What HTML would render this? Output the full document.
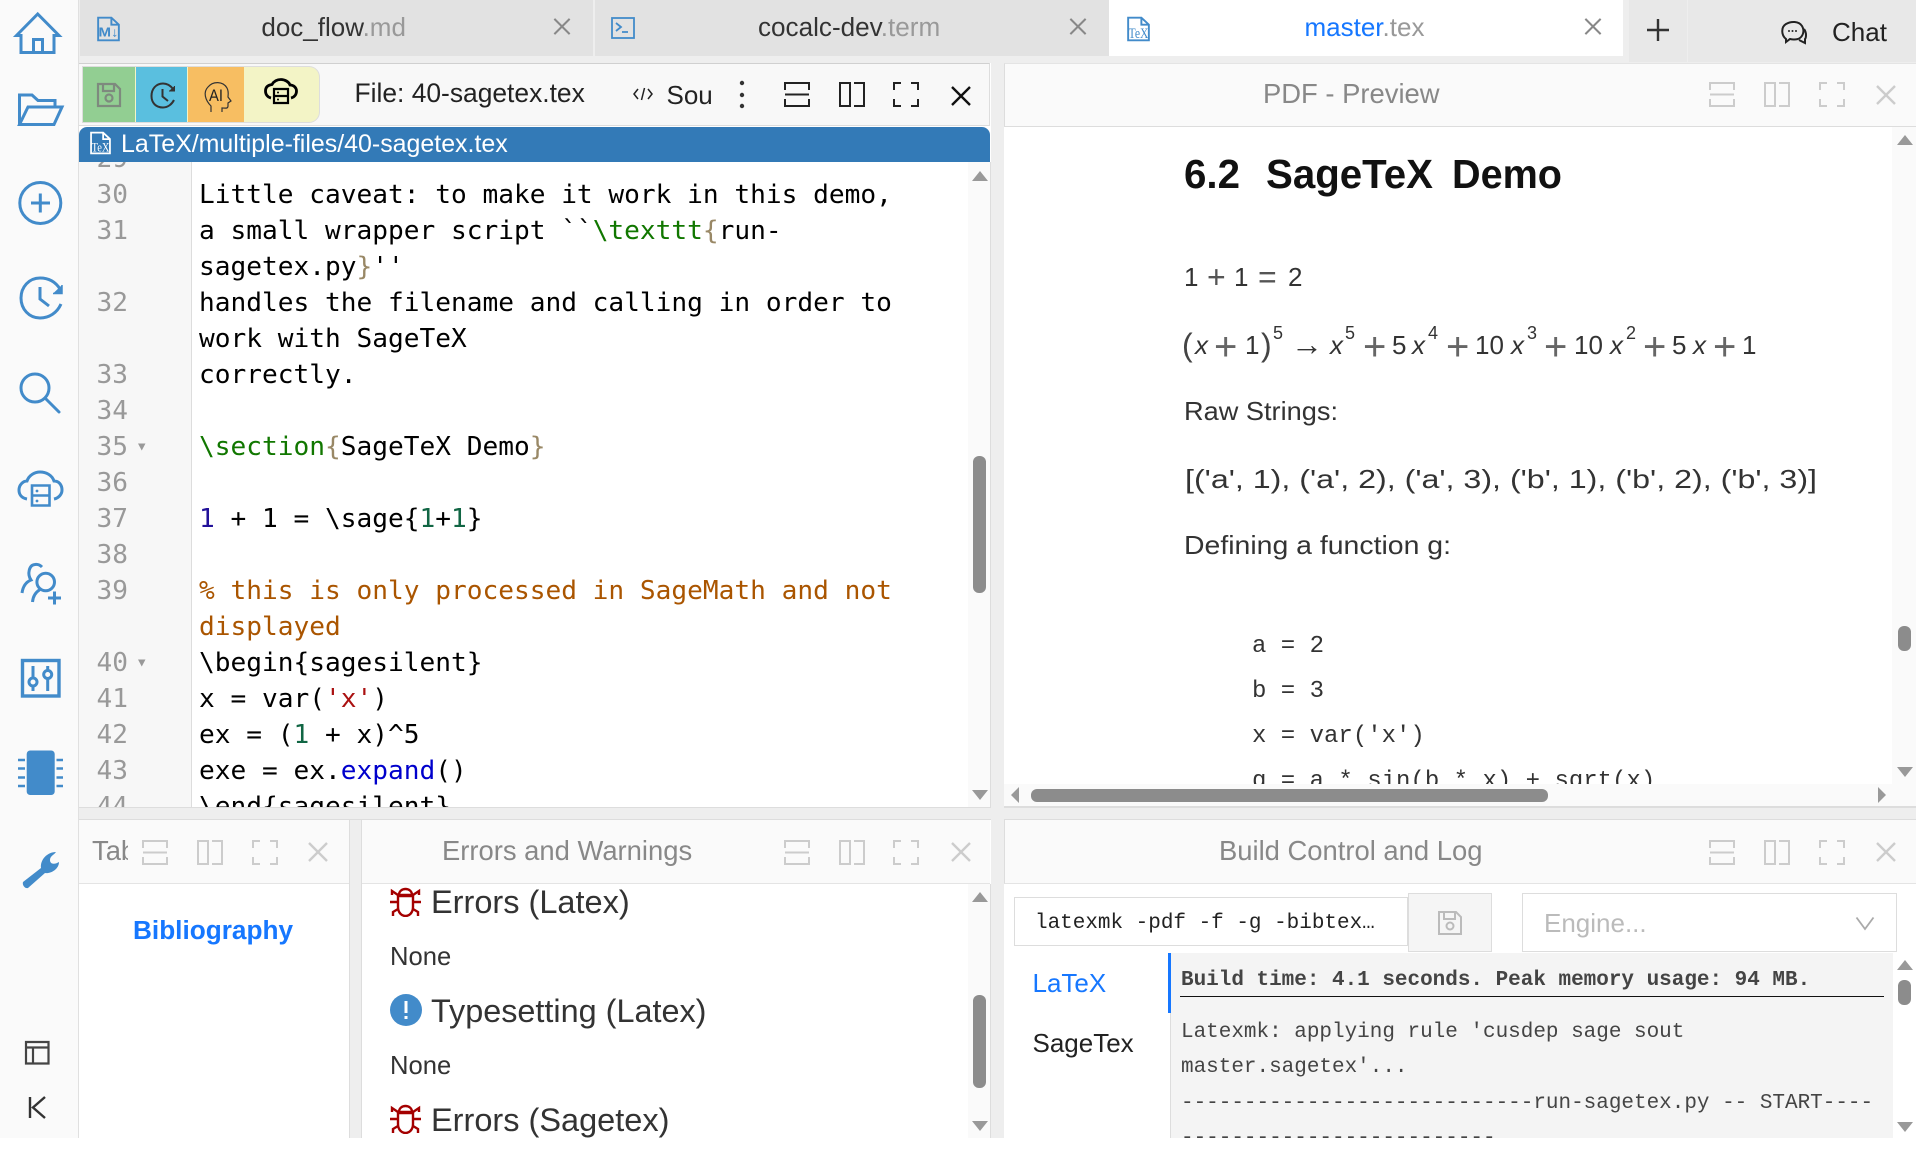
<!DOCTYPE html>
<html><head><meta charset="utf-8"><title>CoCalc</title>
<style>
html,body{margin:0;padding:0;background:#fff}
body{position:relative;width:1916px;height:1138px;overflow:hidden;font-family:"Liberation Sans",sans-serif;color:#333}
.a{position:absolute}
.t{position:absolute;white-space:nowrap;line-height:36px;font-size:26px}
.tt{font-size:27.4px;color:#888}
.g{color:#999}
svg{position:absolute;overflow:visible}
.code{position:absolute;left:79px;top:162px;width:889px;height:645px;overflow:hidden;background:#fff}
.code div{position:absolute;white-space:pre;font-family:"DejaVu Sans Mono",monospace;font-size:26.17px;line-height:36px;color:#000;margin-top:1.6px}
.code .gut{position:absolute;left:0;top:0;width:112px;height:645px;background:#f7f7f7;border-right:1px solid #ddd;margin:0}
.code .n{color:#999;left:17.5px}
.code .l{left:120px}
.kw{color:#117700}.br{color:#998866}.at{color:#221199}.cm{color:#aa5500}.st{color:#aa1111}.nu{color:#116644}.va{color:#0000cc}
.mono{font-family:"Liberation Mono",monospace;font-size:20.98px}
</style></head>
<body>
<svg width="0" height="0" style="position:absolute">
<defs>
<symbol id="sh" viewBox="0 0 26 25"><path d="M1 8V1H25V8M1 12.5H25M1 17V24H25V17" fill="none" stroke="currentColor" stroke-width="2"/></symbol>
<symbol id="sv" viewBox="0 0 26 25"><path d="M11 1H1V24H11ZM15 1H25V24H15" fill="none" stroke="currentColor" stroke-width="2"/></symbol>
<symbol id="fs" viewBox="0 0 26 25"><path d="M8 1H1V8M18 1H25V8M1 17V24H8M25 17V24H18" fill="none" stroke="currentColor" stroke-width="2"/></symbol>
<symbol id="xx" viewBox="0 0 20 20"><path d="M1 1L19 19M19 1L1 19" fill="none" stroke="currentColor" stroke-width="2.4"/></symbol>
<symbol id="bug" viewBox="0 0 31 31"><g fill="none" stroke="#a40000" stroke-width="2.4"><path d="M9 9C9 1 22 1 22 9Z"/><path d="M8 10H23V21C23 27 19 30 15.5 30C12 30 8 27 8 21Z"/><path d="M0 16H8M23 16H31M8 9L2 5V9M23 9L29 5V9M8 23L3 26V30M23 23L28 26V30"/></g></symbol>
<symbol id="fl" viewBox="0 0 24 26"><path d="M1.2 1.2H15L22.8 8.5V24.8H1.2ZM15 1.2V8.5H22.8" fill="none" stroke="currentColor" stroke-width="2"/></symbol>
</defs>
</svg>

<!-- left sidebar -->
<div class="a" style="left:0;top:0;width:78px;height:1138px;background:#fafafa;border-right:1px solid #e0e0e0"></div>
<svg style="left:0;top:0" width="79" height="1138" fill="none" stroke="#428bca" stroke-width="3">
<path d="M21 35.5H16.5L37.7 14L59 35.5H54V52.5H21ZM33.5 52.5V39.5H42.5V52.5"/>
<path d="M19.5 124V95H32L38 100.5H55V107M19.5 124.5L28 107H62L54 124.5Z"/>
<circle cx="40.3" cy="203" r="20.5"/><path d="M31 203H50M40.3 193.5V212.5"/>
<path d="M60 289C55 281 48 278 40 278C29 278 21 287 21 298C21 309 29 318 40 318C49 318 57 313 61 304"/>
<path d="M62 285V293.5H53" fill="#428bca" stroke-width="1.5"/>
<path d="M40 287V299L49 306"/>
<circle cx="35" cy="388" r="14"/><path d="M45 398L59 412" stroke-linecap="round"/>
<path d="M27 499C21 498 19 494 19 490C19 485 23 481 27 481C29 475 35 472 40 472C46 472 52 475 54 481C59 481 62 485 62 490C62 494 59 498 54 499"/>
<path d="M32 485.500H49.500V505.500H32ZM32 495.500H49.500" stroke-width="2.6"/>
<circle cx="37" cy="491" r="1.400" fill="#428bca" stroke="none"/><circle cx="37" cy="501" r="1.400" fill="#428bca" stroke="none"/>
<circle cx="45.700" cy="582" r="8.800"/>
<path d="M32.500 602C33 596 36 592 40 589.500M22 593C23 586 26 582 31 580C27 574 29 565 35 564.500C38 564 40 565 42 567"/>
<path d="M48 598H61M54.500 591.500V604.500"/>
<rect x="22.500" y="660.500" width="36.500" height="35.500" stroke-width="3.400"/>
<path d="M33 666V677M33 687V691M47.700 666V670M47.700 679V691"/>
<circle cx="33" cy="682" r="4"/><circle cx="47.700" cy="674.500" r="4"/>
<path d="M23 882L41 868C40 860 47 852 56 852C54 855 50 856 50 860C50 864 54 865 59 862C59 869 51 874 45 873L28 888C25 889 22 885 23 882Z" fill="#428bca" stroke="none"/>
<rect x="26.700" y="750.500" width="28" height="44.500" rx="3.500" fill="#428bca" stroke="none"/>
<path d="M18 760H25M18 768.500H25M18 777.500H25M18 786H25M56.500 760H63M56.500 768.500H63M56.500 777.500H63M56.500 786H63" stroke-width="2.600"/>
<g stroke="#444" stroke-width="2.200"><path d="M26 1042H48.500V1063.500H26ZM26 1047.500H48.500M33 1047.500V1063.500"/></g>
<g stroke="#333" stroke-width="2.400"><path d="M30 1097V1118M45 1097L33 1107.500L45 1118"/></g>
</svg>

<!-- tabs -->
<div class="a" style="left:79px;top:0;width:1837px;height:63px;background:#eee"></div>
<div class="a" style="left:80px;top:0;width:513px;height:56px;background:#e2e2e2"></div>
<div class="a" style="left:595px;top:0;width:513.500px;height:56px;background:#e2e2e2"></div>
<div class="a" style="left:1109px;top:0;width:514px;height:56px;background:#fff"></div>
<div class="a" style="left:1629px;top:0;width:58px;height:62px;background:#e8e8e8"></div>
<div class="a" style="left:1688px;top:0;width:228px;height:62px;background:#e8e8e8"></div>
<svg style="left:97px;top:15.500px;color:#428bca" width="23" height="26"><use href="#fl" width="23" height="26"/><text x="1.500" y="20.500" font-family="Liberation Sans" font-weight="bold" font-size="13" fill="#428bca" textLength="20" lengthAdjust="spacingAndGlyphs">M↓</text></svg>
<div class="t" style="left:261.400px;top:9px;color:#333;font-size:26px">doc_flow<span class="g">.md</span></div>
<svg style="left:553px;top:18px;color:#888" width="18" height="17"><use href="#xx" width="18" height="17"/></svg>
<svg style="left:611px;top:17px" width="24" height="22" fill="none" stroke="#428bca" stroke-width="1.800"><rect x="1" y="1" width="22" height="20"/><path d="M5 6L10 10L5 14M11 15H17"/></svg>
<div class="t" style="left:758px;top:9px;color:#333;font-size:26.100px">cocalc-dev<span class="g">.term</span></div>
<svg style="left:1069px;top:18px;color:#888" width="18" height="17"><use href="#xx" width="18" height="17"/></svg>
<svg style="left:1127px;top:15.500px;color:#428bca" width="23" height="26"><use href="#fl" width="23" height="26"/><text x="1.500" y="22" font-family="Liberation Serif" font-size="15" fill="#428bca" textLength="20" lengthAdjust="spacingAndGlyphs">TeX</text></svg>
<div class="t" style="left:1304.500px;top:9px;color:#1677ff">master<span class="g">.tex</span></div>
<svg style="left:1584px;top:18px;color:#888" width="18" height="17"><use href="#xx" width="18" height="17"/></svg>
<svg style="left:1647px;top:19px" width="22" height="22" stroke="#333" stroke-width="2.400"><path d="M0 11H22M11 0V22"/></svg>
<svg style="left:1781px;top:21px" width="26" height="23" fill="none" stroke="#222" stroke-width="2"><path d="M5 18C0 14 0 6 5 3C10 0 18 0 21 5C24 10 22 16 17 18C13 19 9 18 9 18L5 21Z"/><path d="M23 8C26 12 25 17 24 18V22L18 19"/><g fill="#222" stroke="none"><circle cx="8" cy="10" r="1"/><circle cx="11.500" cy="10" r="1"/><circle cx="15" cy="10" r="1"/></g></svg>
<div class="t" style="left:1832px;top:14px;color:#222">Chat</div>

<!-- editor frame -->
<div class="a" style="left:79px;top:63px;width:911px;height:63px;background:#f8f8f8;border-top:1px solid #d0d0d0;border-bottom:1px solid #ddd;box-sizing:border-box;border-right:1px solid #ddd"></div>
<div class="a" style="left:83px;top:67px;width:236px;height:55px;border-radius:0 10px 10px 0;overflow:hidden;background:#f3f4c6;box-shadow:0 0 0 1px #ddd">
<div class="a" style="left:0;top:0;width:52px;height:55px;background:#92ce92"></div>
<div class="a" style="left:53px;top:0;width:51px;height:55px;background:#5abfdf"></div>
<div class="a" style="left:105px;top:0;width:56px;height:55px;background:#f7be62"></div>
</div>
<svg style="left:97px;top:83px" width="24" height="24" fill="none" stroke="#7e8a7e" stroke-width="2.200"><path d="M1 1H18L23 6V23H1ZM6 1V8H17V1"/><circle cx="12" cy="15" r="3.500"/></svg>
<svg style="left:150px;top:82px" width="26" height="27" fill="none" stroke="#333" stroke-width="2"><path d="M23 7C20 3 17 1.500 13 1.500C6 1.500 1.500 7 1.500 14C1.500 21 6 25.500 13 25.500C18 25.500 22 22 24 18"/><path d="M24.500 4V9H19" fill="#333" stroke-width="1"/><path d="M12.500 7V14.500L18 19"/></svg>
<svg style="left:204px;top:82px" width="28" height="31" fill="none" stroke="#333" stroke-width="1.200"><path d="M7 30V24C1 18 -1 10 4 5C9 -1 19 -1 23 6C25 10 24 13 24 15L27 19L24 21V24C24 27 21 26 18 26V30"/><text x="5" y="19" font-family="Liberation Sans" font-size="17" fill="#222" stroke="none" textLength="14" lengthAdjust="spacingAndGlyphs">AI</text></svg>
<svg style="left:264px;top:78px" width="34" height="26" fill="none" stroke="#000" stroke-width="2.800"><path d="M7 20C3 19 1.500 16 1.500 13C1.500 9 4 7 8 6.500C10 3 13 1.500 17 1.500C21 1.500 25 4 26 7C30 7 32.500 10 32.500 13C32.500 16 31 19 27 20"/><path d="M10 11H24V25H10ZM10 18H24" stroke-width="2.200"/><circle cx="14" cy="14.500" r="1" fill="#000" stroke="none"/><circle cx="14" cy="21.500" r="1" fill="#000" stroke="none"/></svg>
<div class="t" style="left:354.500px;top:75px;font-size:26.400px;color:#222">File: 40-sagetex.tex</div>
<svg style="left:633px;top:87px" width="20" height="14" fill="none" stroke="#222" stroke-width="1.500"><path d="M5 2L1 7L5 12M15 2L19 7L15 12M11.500 1L8.500 13"/></svg>
<div class="t" style="left:666.500px;top:77px;color:#222">Sou</div>
<svg style="left:738px;top:80px" width="8" height="30" fill="#333"><circle cx="4" cy="3" r="2.200"/><circle cx="4" cy="15" r="2.200"/><circle cx="4" cy="26" r="2.200"/></svg>
<svg style="left:784px;top:82px;color:#222" width="26" height="25"><use href="#sh" width="26" height="25"/></svg>
<svg style="left:839px;top:82px;color:#222" width="26" height="25"><use href="#sv" width="26" height="25"/></svg>
<svg style="left:893px;top:82px;color:#222" width="26" height="25"><use href="#fs" width="26" height="25"/></svg>
<svg style="left:951px;top:86px;color:#111" width="20" height="20"><use href="#xx" width="20" height="20"/></svg>

<!-- path bar -->
<div class="a" style="left:79px;top:127px;width:911px;height:35px;background:#337ab7;border-radius:8px 8px 0 0"></div>
<svg style="left:90px;top:130px;color:#fff" width="21" height="26"><use href="#fl" width="21" height="26"/><text x="1.500" y="21.500" font-family="Liberation Serif" font-size="13" fill="#fff" textLength="18" lengthAdjust="spacingAndGlyphs">TeX</text></svg>
<div class="t" style="left:121px;top:126px;color:#fff;font-size:24.950px">LaTeX/multiple-files/40-sagetex.tex</div>

<!-- code editor -->
<div class="code">
<div class="gut"></div>
<div class="n" style="top:-23px">29</div>
<div class="n" style="top:13px">30</div><div class="l" style="top:13px">Little caveat: to make it work in this demo,</div>
<div class="n" style="top:49px">31</div><div class="l" style="top:49px">a small wrapper script ``<span class="kw">\texttt</span><span class="br">{</span>run-</div>
<div class="l" style="top:85px">sagetex.py<span class="br">}</span>''</div>
<div class="n" style="top:121px">32</div><div class="l" style="top:121px">handles the filename and calling in order to</div>
<div class="l" style="top:157px">work with SageTeX</div>
<div class="n" style="top:193px">33</div><div class="l" style="top:193px">correctly.</div>
<div class="n" style="top:229px">34</div>
<div class="n" style="top:265px">35</div><div class="l" style="top:265px"><span class="kw">\section</span><span class="br">{</span>SageTeX Demo<span class="br">}</span></div>
<div class="n" style="top:301px">36</div>
<div class="n" style="top:337px">37</div><div class="l" style="top:337px"><span class="at">1</span> + 1 = \sage{<span class="nu">1</span>+<span class="nu">1</span>}</div>
<div class="n" style="top:373px">38</div>
<div class="n" style="top:409px">39</div><div class="l cm" style="top:409px;color:#aa5500">% this is only processed in SageMath and not</div>
<div class="l" style="top:445px;color:#aa5500">displayed</div>
<div class="n" style="top:481px">40</div><div class="l" style="top:481px">\begin{sagesilent}</div>
<div class="n" style="top:517px">41</div><div class="l" style="top:517px">x = var(<span class="st">'x'</span>)</div>
<div class="n" style="top:553px">42</div><div class="l" style="top:553px">ex = (<span class="nu">1</span> + x)^5</div>
<div class="n" style="top:589px">43</div><div class="l" style="top:589px">exe = ex.<span class="va">expand</span>()</div>
<div class="n" style="top:625px">44</div><div class="l" style="top:625px">\end{sagesilent}</div>
</div>
<svg style="left:137px;top:0" width="10" height="800" fill="#999"><path d="M1 443.500H8.500L4.750 450.500ZM1 659.500H8.500L4.750 666.500Z"/></svg>
<!-- editor scrollbar -->
<div class="a" style="left:968px;top:162px;width:22px;height:645px;background:#fafafa;border-right:1px solid #ddd"></div>
<svg style="left:972px;top:168px" width="16" height="640" fill="#999"><path d="M0 13L8 3L16 13ZM0 622H16L8 632Z"/></svg>
<div class="a" style="left:973px;top:456px;width:13px;height:137px;background:#8c8c8c;border-radius:6px"></div>

<div class="a" style="left:991px;top:63px;width:13px;height:757px;background:#eee"></div>

<!-- PDF -->
<div class="a" style="left:1004px;top:63px;width:912px;height:64px;background:#fafafa;border-top:1px solid #e4e4e4;border-bottom:1px solid #ddd;box-sizing:border-box;border-left:1px solid #ddd"></div>
<div class="t tt" style="left:1263px;top:76px">PDF - Preview</div>
<svg style="left:1709px;top:82px;color:#ccc" width="26" height="25"><use href="#sh" width="26" height="25"/></svg>
<svg style="left:1764px;top:82px;color:#ccc" width="26" height="25"><use href="#sv" width="26" height="25"/></svg>
<svg style="left:1819px;top:82px;color:#ccc" width="26" height="25"><use href="#fs" width="26" height="25"/></svg>
<svg style="left:1876px;top:85px;color:#ccc" width="20" height="20"><use href="#xx" width="20" height="20"/></svg>

<svg style="left:0;top:0" width="1916" height="1138" font-family="Liberation Sans" fill="#333" font-size="26">
<g font-weight="bold" fill="#111" font-size="41">
<text x="1184" y="188" textLength="56" lengthAdjust="spacingAndGlyphs">6.2</text>
<text x="1266" y="188" textLength="167" lengthAdjust="spacingAndGlyphs">SageTeX</text>
<text x="1452" y="188" textLength="110" lengthAdjust="spacingAndGlyphs">Demo</text>
</g>
<text x="1184" y="286">1</text><text x="1207" y="288" font-size="32" fill="#555">+</text><text x="1234" y="286">1</text><text x="1258" y="288" font-size="32" fill="#555">=</text><text x="1288" y="286">2</text>
<text x="1182" y="356" font-size="32" fill="#444">(</text><text x="1195" y="354" font-style="italic">x</text><text x="1214" y="360" font-size="40" fill="#666">+</text><text x="1245" y="354">1</text><text x="1261" y="356" font-size="32" fill="#444">)</text><text x="1273" y="339" font-size="18">5</text>
<text x="1291" y="355" font-size="32" textLength="32" lengthAdjust="spacingAndGlyphs">→</text>
<text x="1330" y="354" font-style="italic">x</text><text x="1345" y="339" font-size="18">5</text><text x="1363" y="360" font-size="40" fill="#666">+</text><text x="1392" y="354">5</text><text x="1412" y="354" font-style="italic">x</text><text x="1428" y="339" font-size="18">4</text><text x="1446" y="360" font-size="40" fill="#666">+</text><text x="1475" y="354">10</text><text x="1511" y="354" font-style="italic">x</text><text x="1527" y="339" font-size="18">3</text><text x="1544" y="360" font-size="40" fill="#666">+</text><text x="1574" y="354">10</text><text x="1610" y="354" font-style="italic">x</text><text x="1626" y="339" font-size="18">2</text><text x="1643" y="360" font-size="40" fill="#666">+</text><text x="1672" y="354">5</text><text x="1693" y="354" font-style="italic">x</text><text x="1713" y="360" font-size="40" fill="#666">+</text><text x="1742" y="354">1</text>
<text x="1184" y="420" textLength="154" lengthAdjust="spacingAndGlyphs">Raw Strings:</text>
<text x="1185" y="488" textLength="632" lengthAdjust="spacingAndGlyphs">[('a', 1), ('a', 2), ('a', 3), ('b', 1), ('b', 2), ('b', 3)]</text>
<text x="1184" y="554" textLength="267" lengthAdjust="spacingAndGlyphs">Defining a function g:</text>
<g font-family="Liberation Mono" font-size="24" fill="#333">
<text x="1252" y="652">a = 2</text><text x="1252" y="697">b = 3</text><text x="1252" y="742">x = var('x')</text><text x="1252" y="787">g = a * sin(b * x) + sqrt(x)</text>
</g>
</svg>
<div class="a" style="left:1004px;top:784px;width:912px;height:23px;background:#fafafa;border-bottom:1px solid #ddd;box-sizing:border-box"></div>
<div class="a" style="left:1892px;top:127px;width:24px;height:657px;background:#fafafa"></div>
<svg style="left:1897px;top:130px" width="16" height="650" fill="#999"><path d="M0 15L8 5L16 15ZM0 637H16L8 647Z"/></svg>
<div class="a" style="left:1898px;top:626px;width:13px;height:25px;background:#8c8c8c;border-radius:6px"></div>
<div class="a" style="left:1031px;top:789px;width:517px;height:13px;background:#8c8c8c;border-radius:6px"></div>
<svg style="left:1010px;top:787px" width="880" height="17" fill="#999"><path d="M9 0V16L1 8ZM868 0L876 8L868 16Z"/></svg>

<!-- horizontal splitter -->
<div class="a" style="left:79px;top:807px;width:1837px;height:13px;background:#eee;border-top:1px solid #ddd;border-bottom:1px solid #ddd;box-sizing:border-box"></div>
<div class="a" style="left:991px;top:807px;width:13px;height:331px;background:#eee"></div>
<div class="a" style="left:349px;top:820px;width:11px;height:318px;background:#eee;border-left:1px solid #ddd;border-right:1px solid #ddd"></div>

<!-- bottom title bars -->
<div class="a" style="left:79px;top:820px;width:270px;height:64px;background:#fafafa;border-bottom:1px solid #e4e4e4;box-sizing:border-box"></div>
<div class="a" style="left:362px;top:820px;width:628px;height:64px;background:#fafafa;border-bottom:1px solid #e4e4e4;box-sizing:border-box"></div>
<div class="a" style="left:1004px;top:820px;width:912px;height:64px;background:#fafafa;border-bottom:1px solid #e4e4e4;border-left:1px solid #ddd;box-sizing:border-box"></div>
<div class="t tt" style="left:92px;top:833px;width:36px;overflow:hidden">Tab</div>
<svg style="left:142px;top:840px;color:#ccc" width="26" height="25"><use href="#sh" width="26" height="25"/></svg>
<svg style="left:197px;top:840px;color:#ccc" width="26" height="25"><use href="#sv" width="26" height="25"/></svg>
<svg style="left:252px;top:840px;color:#ccc" width="26" height="25"><use href="#fs" width="26" height="25"/></svg>
<svg style="left:308px;top:842px;color:#ccc" width="20" height="20"><use href="#xx" width="20" height="20"/></svg>
<div class="t tt" style="left:442px;top:833px">Errors and Warnings</div>
<svg style="left:784px;top:840px;color:#ccc" width="26" height="25"><use href="#sh" width="26" height="25"/></svg>
<svg style="left:839px;top:840px;color:#ccc" width="26" height="25"><use href="#sv" width="26" height="25"/></svg>
<svg style="left:893px;top:840px;color:#ccc" width="26" height="25"><use href="#fs" width="26" height="25"/></svg>
<svg style="left:951px;top:842px;color:#ccc" width="20" height="20"><use href="#xx" width="20" height="20"/></svg>
<div class="t tt" style="left:1219px;top:833px">Build Control and Log</div>
<svg style="left:1709px;top:840px;color:#ccc" width="26" height="25"><use href="#sh" width="26" height="25"/></svg>
<svg style="left:1764px;top:840px;color:#ccc" width="26" height="25"><use href="#sv" width="26" height="25"/></svg>
<svg style="left:1819px;top:840px;color:#ccc" width="26" height="25"><use href="#fs" width="26" height="25"/></svg>
<svg style="left:1876px;top:842px;color:#ccc" width="20" height="20"><use href="#xx" width="20" height="20"/></svg>

<!-- bibliography -->
<div class="t" style="left:133px;top:912px;font-weight:bold;font-size:26.200px;color:#1677ff">Bibliography</div>

<!-- errors -->
<div class="a" style="left:968px;top:884px;width:22px;height:254px;background:#fafafa;border-right:1px solid #ddd"></div>
<svg style="left:390px;top:886px" width="31" height="31"><use href="#bug" width="31" height="31"/></svg>
<div class="t" style="left:431px;top:884px;font-size:32.500px;color:#333">Errors (Latex)</div>
<div class="t" style="left:390px;top:939px;font-size:25.600px;color:#333">None</div>
<svg style="left:390px;top:994px" width="32" height="32"><circle cx="16" cy="16" r="16" fill="#428bca"/><rect x="14.500" y="7" width="3" height="12" fill="#fff"/><rect x="14.500" y="22" width="3" height="3" fill="#fff"/></svg>
<div class="t" style="left:431px;top:993px;font-size:32.400px;color:#333">Typesetting (Latex)</div>
<div class="t" style="left:390px;top:1048px;font-size:25.600px;color:#333">None</div>
<svg style="left:390px;top:1103px" width="31" height="31"><use href="#bug" width="31" height="31"/></svg>
<div class="t" style="left:431px;top:1101.500px;font-size:32.500px;color:#333">Errors (Sagetex)</div>
<svg style="left:972px;top:889px" width="16" height="246" fill="#999"><path d="M0 13L8 3L16 13ZM0 232H16L8 242Z"/></svg>
<div class="a" style="left:973px;top:995px;width:13px;height:93px;background:#8c8c8c;border-radius:6px"></div>

<!-- build -->
<div class="a" style="left:1014px;top:897px;width:394px;height:49px;border:1px solid #ddd;box-sizing:border-box;background:#fff"></div>
<div class="t mono" style="left:1035px;top:905.500px;color:#222">latexmk -pdf -f -g -bibtex…</div>
<div class="a" style="left:1408px;top:893px;width:84px;height:59px;background:#f5f5f5;border:1px solid #ddd;box-sizing:border-box"></div>
<svg style="left:1438px;top:911px" width="24" height="24" fill="none" stroke="#bbb" stroke-width="2"><path d="M1 1H18L23 6V23H1ZM6 1V8H17V1"/><circle cx="12" cy="15" r="3.500"/></svg>
<div class="a" style="left:1522px;top:893px;width:375px;height:59px;background:#fff;border:1px solid #ddd;box-sizing:border-box"></div>
<div class="t" style="left:1544px;top:904.500px;color:#bbb">Engine...</div>
<svg style="left:1856px;top:917px" width="18" height="13" fill="none" stroke="#aaa" stroke-width="1.800"><path d="M0.500 0.500L9 12L17.500 0.500"/></svg>
<div class="t" style="left:1032.500px;top:965px;color:#1677ff">LaTeX</div>
<div class="t" style="left:1032.500px;top:1025px;color:#222">SageTex</div>
<div class="a" style="left:1171px;top:953px;width:722px;height:185px;background:#f4f4f4"></div>
<div class="a" style="left:1170px;top:953px;width:1px;height:185px;background:#ddd"></div>
<div class="a" style="left:1168px;top:953px;width:3px;height:60px;background:#1677ff"></div>
<div class="t mono" style="left:1181px;top:962.500px;color:#444;font-weight:bold">Build time: 4.1 seconds. Peak memory usage: 94 MB.</div>
<div class="a" style="left:1180px;top:995.500px;width:704px;height:1px;background:#111"></div>
<div class="t mono" style="left:1181px;top:1015px;color:#444">Latexmk: applying rule 'cusdep sage sout</div>
<div class="t mono" style="left:1181px;top:1050px;color:#444">master.sagetex'...</div>
<div class="t mono" style="left:1181px;top:1085.500px;color:#444">----------------------------run-sagetex.py -- START----</div>
<div class="t mono" style="left:1181px;top:1121px;color:#444">-------------------------</div>
<svg style="left:1897px;top:955px" width="16" height="180" fill="#999"><path d="M0 15L8 5L16 15ZM0 167H16L8 177Z"/></svg>
<div class="a" style="left:1898px;top:980px;width:13px;height:25px;background:#8c8c8c;border-radius:6px"></div>
</body></html>
